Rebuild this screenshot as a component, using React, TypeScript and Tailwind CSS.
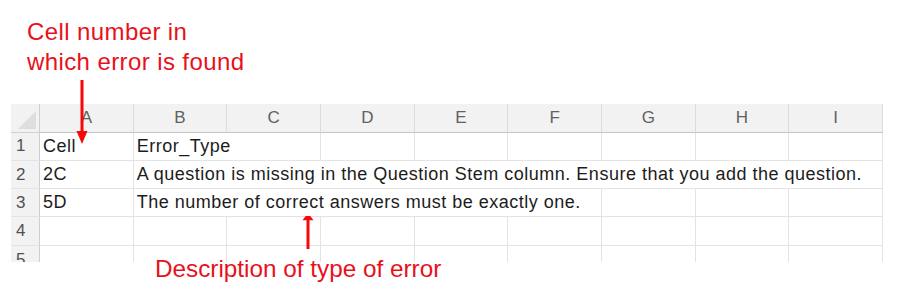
const columns = ["A", "B", "C", "D", "E", "F", "G", "H", "I"];

const rows: Record<number, { a?: string; b?: string }> = {
  1: { a: "Cell", b: "Error_Type" },
  2: { a: "2C", b: "A question is missing in the Question Stem column. Ensure that you add the question." },
  3: { a: "5D", b: "The number of correct answers must be exactly one." },
  4: {},
  5: {},
};

function Arrow({ up }: { up?: boolean }) {
  return (
    <svg width="14" height="100%" viewBox="0 0 14 64" preserveAspectRatio="none" className="h-full">
      {up ? (
        <>
          <rect x="5.5" y="12" width="3" height="52" fill="#f50a0a" />
          <polygon points="7,0 1.5,13 12.5,13" fill="#f50a0a" />
        </>
      ) : (
        <>
          <rect x="5.5" y="0" width="3" height="52" fill="#f50a0a" />
          <polygon points="7,64 1.5,51 12.5,51" fill="#f50a0a" />
        </>
      )}
    </svg>
  );
}

export default function App() {
  return (
    <div className="relative w-[898px] h-[305px] bg-white overflow-hidden font-['Liberation_Sans',Arial,sans-serif]">
      {/* annotation top */}
      <div className="pl-[27px] pt-[17px] text-[24px] leading-[30px] tracking-[0.4px] text-[#e8111b]">
        Cell number in
        <br />
        which error is found
      </div>

      {/* sheet */}
      <div className="ml-[11px] mt-[27px] w-[872px] h-[158px] overflow-hidden">
        <div className="grid grid-cols-[29px_repeat(9,93.67px)]">
          <div className="h-[28.5px] bg-[#f2f2f2] border-r border-b border-[#cfcfcf] flex items-end justify-end p-[3px]">
            <svg width="18" height="18" viewBox="0 0 18 18">
              <polygon points="18,0 18,18 0,18" fill="#dedede" />
            </svg>
          </div>
          {columns.map((c) => (
            <div
              key={c}
              className="h-[28.5px] bg-[#f2f2f2] border-r border-b border-r-[#dcdcdc] border-b-[#c4c4c4] flex items-center justify-center text-[17px] text-[#616161]"
            >
              {c}
            </div>
          ))}
          {[1, 2, 3, 4, 5].map((n) => (
            <div key={n} className="contents">
              <div className="h-[28.33px] bg-[#f2f2f2] border-r border-b border-r-[#cfcfcf] border-b-[#e3e3e3] flex items-center pl-[5px] text-[17px] text-[#505050]">
                {n}
              </div>
              {columns.map((c) => (
                <div
                  key={c}
                  className="h-[28.33px] border-r border-b border-[#e3e3e3] flex items-center overflow-visible"
                >
                  {c === "A" && rows[n].a && (
                    <span className="pl-[3px] text-[18px] tracking-[0.5px] text-[#1c1c1c] whitespace-nowrap">{rows[n].a}</span>
                  )}
                  {c === "B" && rows[n].b && (
                    <span className="relative z-10 ml-[3px] self-stretch flex items-center bg-white pr-[1px] text-[18px] tracking-[0.5px] text-[#1c1c1c] whitespace-nowrap">
                      {rows[n].b}
                    </span>
                  )}
                </div>
              ))}
            </div>
          ))}
        </div>
      </div>

      {/* annotation bottom */}
      <div className="ml-[155px] -mt-[7px] text-[24.3px] leading-[28px] text-[#e8111b]">
        Description of type of error
      </div>

      {/* arrows */}
      <div className="absolute left-[75px] top-[80px] h-[64px]">
        <Arrow />
      </div>
      <div className="absolute left-[301px] top-[213px] h-[36px]">
        <Arrow up />
      </div>
    </div>
  );
}
